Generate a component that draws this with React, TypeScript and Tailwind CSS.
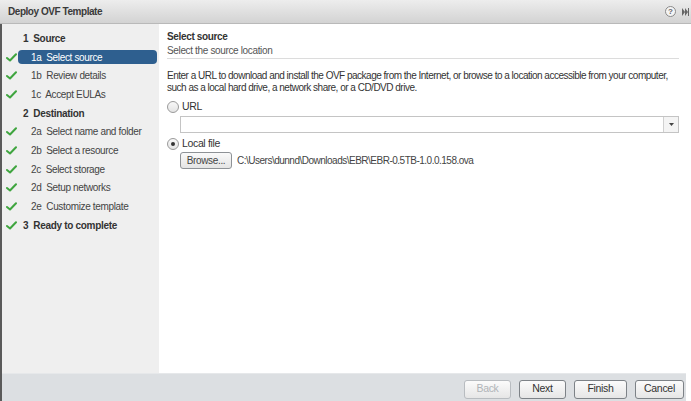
import React from "react";

const Check = () => (
  <svg width="11" height="9" viewBox="0 0 11 9" className="shrink-0">
    <path d="M1 5 L4 7.5 L10 1.2" stroke="#3fa53f" strokeWidth="2" fill="none" strokeLinecap="round" strokeLinejoin="round" />
  </svg>
);

type Item = { label: string; check?: boolean; sub?: boolean; bold?: boolean; selected?: boolean };

const items: Item[] = [
  { label: "1  Source", bold: true },
  { label: "1a  Select source", check: true, sub: true, selected: true },
  { label: "1b  Review details", check: true, sub: true },
  { label: "1c  Accept EULAs", check: true, sub: true },
  { label: "2  Destination", bold: true },
  { label: "2a  Select name and folder", check: true, sub: true },
  { label: "2b  Select a resource", check: true, sub: true },
  { label: "2c  Select storage", check: true, sub: true },
  { label: "2d  Setup networks", check: true, sub: true },
  { label: "2e  Customize template", check: true, sub: true },
  { label: "3  Ready to complete", check: true, bold: true },
];

const Btn = ({ label, w, disabled }: { label: string; w: string; disabled?: boolean }) => (
  <div
    className={`${w} h-[19px] flex items-center justify-center rounded-[3px] border ${
      disabled ? "border-[#b8bcc0] text-[#b0b4b8]" : "border-[#7d8287] text-[#333]"
    } bg-gradient-to-b from-[#fbfbfb] to-[#e6e6e6] text-[10.5px] tracking-[-0.3px]`}
  >
    {label}
  </div>
);

export default function App() {
  return (
    <div
      className="w-[691px] h-[401px] bg-white flex flex-col overflow-hidden text-[#333]"
      style={{ fontFamily: '"Liberation Sans", Arial, sans-serif' }}
    >
      {/* title bar */}
      <div className="h-[24px] shrink-0 flex items-center justify-between bg-gradient-to-b from-[#ededed] to-[#d3d3d3] border-b border-[#b9b9b9] pl-[8px] pr-[2px]">
        <span className="text-[10px] tracking-[-0.45px] font-bold text-[#3a3a3a]">Deploy OVF Template</span>
        <div className="flex items-center gap-[6px]">
          <div className="w-[11px] h-[11px] rounded-full border border-[#8a8a8a] bg-[#f4f4f4] flex items-center justify-center text-[8px] font-bold text-[#666] leading-none">
            ?
          </div>
          <svg width="7" height="8" viewBox="0 0 7 8">
            <path d="M0 0 L3 4 L0 8 Z M3 0 L6 4 L3 8 Z" fill="#666" />
            <rect x="6" y="0" width="1" height="8" fill="#666" />
          </svg>
        </div>
      </div>

      {/* body */}
      <div className="flex-1 flex min-h-0">
        <div className="w-[2px] bg-[#5a5a5a] shrink-0" />
        <div className="w-[157px] shrink-0 bg-[#efefef] pt-[5px] pl-[4px] pr-[2px] flex flex-col">
          {items.map((it, i) => (
            <div key={i} className="h-[18.7px] flex items-center">
              <div className="w-[11px] flex items-center">{it.check ? <Check /> : null}</div>
              {it.sub ? (
                <div
                  className={`ml-[1px] flex-1 h-[14px] flex items-center pl-[13px] rounded-[4px] text-[10px] tracking-[-0.35px] whitespace-pre ${
                    it.selected ? "bg-[#2e5f8f] text-white" : "text-[#444]"
                  }`}
                >
                  {it.label}
                </div>
              ) : (
                <div className="ml-[6px] text-[10px] tracking-[-0.3px] font-bold text-[#333] whitespace-pre">{it.label}</div>
              )}
            </div>
          ))}
        </div>

        <div className="flex-1 min-w-0 bg-white pl-[8px] pr-[5px] pt-[6px] text-[10px] tracking-[-0.35px]">
          <div className="font-bold text-[#333] leading-[13px]">Select source</div>
          <div className="text-[#555] leading-[13px] mt-[1px]">Select the source location</div>
          <div className="h-px bg-[#dcdcdc] mt-[1px] mr-[2px]" />
          <div className="text-[#333] leading-[12px] mt-[11px] whitespace-nowrap tracking-[-0.5px]">
            Enter a URL to download and install the OVF package from the Internet, or browse to a location accessible from your computer,
            <br />
            such as a local hard drive, a network share, or a CD/DVD drive.
          </div>
          <div className="flex items-center mt-[6px] h-[14px]">
            <div className="w-[12px] h-[12px] rounded-full border border-[#9a9a9a] bg-gradient-to-b from-[#f8f8f8] to-[#e4e4e4]" />
            <span className="ml-[3px] text-[10.5px]">URL</span>
          </div>
          <div className="ml-[13px] mt-[2px] mr-[2px] h-[17px] border border-[#c4c4c4] flex justify-end">
            <div className="w-[15px] h-full border-l border-[#d0d0d0] bg-[#f4f4f4] flex items-center justify-center">
              <svg width="5" height="3" viewBox="0 0 5 3">
                <path d="M0 0 L5 0 L2.5 3 Z" fill="#444" />
              </svg>
            </div>
          </div>
          <div className="flex items-center mt-[4px] h-[14px]">
            <div className="w-[12px] h-[12px] rounded-full border border-[#9a9a9a] bg-gradient-to-b from-[#f8f8f8] to-[#e4e4e4] flex items-center justify-center">
              <div className="w-[4px] h-[4px] rounded-full bg-[#333]" />
            </div>
            <span className="ml-[3px] text-[10.5px]">Local file</span>
          </div>
          <div className="flex items-center ml-[13px] mt-[1px]">
            <div className="w-[52px] h-[17px] flex items-center justify-center rounded-[3px] border border-[#8e9296] bg-gradient-to-b from-[#fafafa] to-[#e4e4e4] text-[#444]">
              Browse...
            </div>
            <span className="ml-[5px] text-[#444] tracking-[-0.5px]">C:\Users\dunnd\Downloads\EBR\EBR-0.5TB-1.0.0.158.ova</span>
          </div>
        </div>
        <div className="w-[5px] shrink-0 bg-white" />
      </div>

      {/* footer */}
      <div className="h-[28px] shrink-0 flex">
        <div className="w-[2px] bg-[#5a5a5a] shrink-0" />
        <div className="w-[684px] bg-[#dcdfe2] border-t border-[#e6e8ea] flex items-center justify-end gap-[8px] pr-[2px] pt-[3px]">
          <Btn label="Back" w="w-[47px]" disabled />
          <Btn label="Next" w="w-[47px]" />
          <Btn label="Finish" w="w-[53px]" />
          <Btn label="Cancel" w="w-[49px]" />
        </div>
      </div>
    </div>
  );
}
